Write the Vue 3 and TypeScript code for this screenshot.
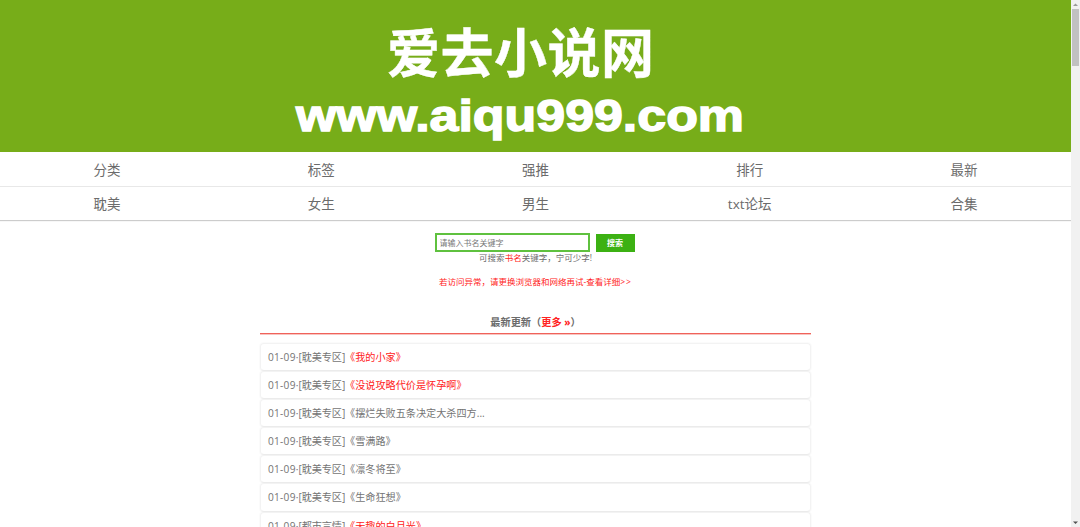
<script setup lang="ts">
interface Book {
  date: string
  category: string
  title: string
  hot?: boolean
}

const navRows: string[][] = [
  ['分类', '标签', '强推', '排行', '最新'],
  ['耽美', '女生', '男生', 'txt论坛', '合集'],
]

const books: Book[] = [
  { date: '01-09', category: '耽美专区', title: '《我的小家》', hot: true },
  { date: '01-09', category: '耽美专区', title: '《没说攻略代价是怀孕啊》', hot: true },
  { date: '01-09', category: '耽美专区', title: '《摆烂失败五条决定大杀四方...' },
  { date: '01-09', category: '耽美专区', title: '《雪满路》' },
  { date: '01-09', category: '耽美专区', title: '《凛冬将至》' },
  { date: '01-09', category: '耽美专区', title: '《生命狂想》' },
  { date: '01-09', category: '都市言情', title: '《无趣的白月光》', hot: true },
]
</script>

<template>
  <div class="window">
    <div class="page">
      <header class="banner">
        <svg width="480" height="152" viewBox="280 0 480 152">
          <text class="logo-cn" x="387" y="73" textLength="267">爱去小说网</text>
          <text class="logo-url" x="296" y="130.500" textLength="448" lengthAdjust="spacingAndGlyphs">www.aiqu999.com</text>
        </svg>
      </header>

      <nav class="nav">
        <div v-for="(row, i) in navRows" :key="i" class="nav-row">
          <a v-for="item in row" :key="item">{{ item }}</a>
        </div>
      </nav>

      <form class="search" @submit.prevent>
        <input type="text" placeholder="请输入书名关键字" />
        <button type="submit">搜索</button>
      </form>
      <p class="hint">可搜索<em>书名</em>关键字，宁可少字!</p>
      <p class="notice">若访问异常，请更换浏览器和网络再试-查看详细<span>&gt;&gt;</span></p>

      <main class="updates">
        <h2>最新更新（<a>更多 »</a>）</h2>
        <ul>
          <li v-for="book in books" :key="book.title">
            <span class="date">{{ book.date }}·</span><span class="cat">[{{ book.category }}]</span><a :class="{ hot: book.hot }">{{ book.title }}</a>
          </li>
        </ul>
      </main>
    </div>

    <aside class="scrollbar">
      <svg width="9" height="9" viewBox="0 0 9 9"><path d="M2 6 4.500 3.500 7 6z" fill="#999" /></svg>
      <div class="thumb"></div>
      <svg class="down" width="9" height="9" viewBox="0 0 9 9"><path d="M2 3.500h5L4.500 6z" fill="#505050" /></svg>
    </aside>
  </div>
</template>

<style>
body {
  overflow: hidden;
}
</style>

<style scoped>
.window {
  display: flex;
  width: 1080px;
  height: 527px;
  overflow: hidden;
  background: #fff;
  color: #6b6b6b;
  font-family: "Open Sans", "Noto Sans CJK SC", sans-serif;
}
.page {
  width: 1071px;
  height: 527px;
  overflow: hidden;
}
.banner {
  display: flex;
  height: 152px;
  padding-left: 280px;
  background: #77ad19;
}
.logo-cn {
  fill: #fff;
  stroke: #fff;
  stroke-width: 0.4px;
  font: 700 53px "Noto Sans CJK SC", sans-serif;
}
.logo-url {
  fill: #fff;
  stroke: #fff;
  stroke-width: 1.4px;
  font: bold 43.500px "Liberation Sans", sans-serif;
}
.nav {
  box-shadow: 0 1px 1px #ccc;
}
.nav-row {
  display: grid;
  grid-template-columns: repeat(5, 1fr);
  box-sizing: border-box;
  height: 34px;
  line-height: 37px;
  text-align: center;
  font-size: 13.5px;
}
.nav-row + .nav-row {
  border-top: 1px solid #e8e8e8;
  line-height: 35px;
}
.search {
  display: flex;
  justify-content: center;
  gap: 6px;
  height: 19px;
  padding: 13px 2px 0 0;
}
.search input {
  box-sizing: border-box;
  width: 155px;
  height: 19px;
  margin: 0;
  padding: 0 3px;
  border: 2px solid #5fc13f;
  outline: none;
  border-radius: 0;
  font: 8px "Noto Sans CJK SC", sans-serif;
}
.search input::placeholder {
  color: #777;
}
.search button {
  width: 39px;
  height: 18px;
  margin: 1px 0 0;
  padding: 0;
  border: 0;
  background: #3cb113;
  color: #fff;
  font: bold 8px/18px "Noto Sans CJK SC", sans-serif;
}
.hint,
.notice {
  margin: 0;
  text-align: center;
  font-size: 8.5px;
  line-height: 12px;
}
.hint em {
  color: #f22;
  font-style: normal;
}
.notice {
  margin-top: 12px;
  color: #f22;
}
.notice span {
  letter-spacing: 1px;
}
.updates {
  width: 551px;
  margin: 26px auto 0;
}
h2 {
  height: 19px;
  margin: 0;
  border-bottom: 1px solid #f0625a;
  box-shadow: 0 1px 0 #f8c4c0;
  text-align: center;
  font-size: 10.2px;
  line-height: 17px;
}
h2 a,
.hot {
  color: #f22;
}
ul {
  margin: 9px 0 0;
  padding: 0;
  list-style: none;
}
li {
  box-sizing: border-box;
  height: 28.100px;
  padding-left: 7px;
  border: 1px solid #f3f3f3;
  border-bottom-color: #eaeaea;
  border-radius: 4px;
  box-shadow: 0 0 2px #eee;
  color: #747474;
  font-size: 10.150px;
  line-height: 27px;
  white-space: nowrap;
}
.date {
  letter-spacing: 0.25px;
}
.cat {
  letter-spacing: -0.1px;
}
.scrollbar {
  display: flex;
  flex-direction: column;
  width: 9px;
  background: #f1f1f1;
}
.thumb {
  width: 7px;
  height: 57px;
  margin: 0 auto;
  background: #c1c1c1;
}
.down {
  margin-top: auto;
}
</style>
